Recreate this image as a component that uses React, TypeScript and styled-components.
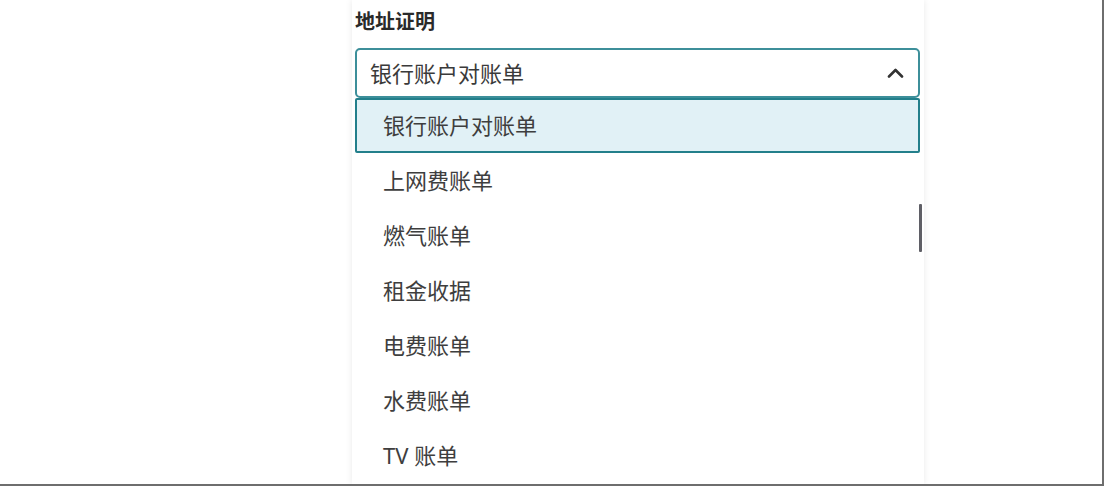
import React from "react";
import styled, { createGlobalStyle } from "styled-components";

const GlobalStyle = createGlobalStyle`
  html, body { margin: 0; padding: 0; background: #ffffff; }
  body { font-family: "Noto Sans", "Noto Sans CJK SC", sans-serif; }
  * { box-sizing: border-box; }
`;

const Frame = styled.div`
  width: 1104px;
  height: 486px;
  border-right: 2px solid #6e6e6e;
  border-bottom: 2px solid #6e6e6e;
  overflow: hidden;
  display: flex;
  padding-left: 352px;
  background: #ffffff;
`;

const Column = styled.div`
  width: 572px;
  height: 100%;
  padding: 9px 4px 0 3px;
  background: #ffffff;
  box-shadow: 0 0 7px rgba(0, 0, 0, 0.09);
  display: flex;
  flex-direction: column;
`;

const Label = styled.div`
  font-size: 20px;
  line-height: 26px;
  font-weight: 700;
  color: #2a2a2a;
  padding-left: 0;
  margin-bottom: 13px;
`;

const Field = styled.div`
  position: relative;
  display: flex;
  flex-direction: column;
`;

const SelectBox = styled.div`
  height: 50px;
  border: 2px solid #3d8f9a;
  border-radius: 5px;
  padding: 0 14px 2px 13px;
  display: flex;
  align-items: center;
  justify-content: space-between;
  font-size: 22px;
  color: #3a3a3a;
  background: #ffffff;
`;

const Chevron = styled.svg`
  width: 17px;
  height: 10px;
  display: block;
  margin-top: 1px;
`;

const List = styled.div`
  position: relative;
  display: flex;
  flex-direction: column;
  background: #ffffff;
`;

const Option = styled.div<{ $active?: boolean }>`
  height: 55px;
  display: flex;
  align-items: center;
  padding-left: ${(p) => (p.$active ? "26px" : "28px")};
  padding-bottom: 4px;
  font-size: 22px;
  color: #3e3e3e;
  background: ${(p) => (p.$active ? "#e1f1f6" : "transparent")};
  border: ${(p) => (p.$active ? "2px solid #237f8b" : "none")};
  border-radius: ${(p) => (p.$active ? "2px" : "0")};
`;

const Thumb = styled.div`
  position: absolute;
  right: -2px;
  top: 106px;
  width: 3px;
  height: 48px;
  background: #5f5f66;
  border-radius: 1px;
`;

const options = [
  "银行账户对账单",
  "上网费账单",
  "燃气账单",
  "租金收据",
  "电费账单",
  "水费账单",
  "TV 账单",
];

export default function App() {
  return (
    <>
      <GlobalStyle />
      <Frame>
        <Column>
          <Label>地址证明</Label>
          <Field>
            <SelectBox>
              <span>银行账户对账单</span>
              <Chevron viewBox="0 0 17 10">
                <polyline
                  points="2,8.5 8.5,2 15,8.5"
                  fill="none"
                  stroke="#333"
                  strokeWidth="2.6"
                  strokeLinecap="round"
                  strokeLinejoin="round"
                />
              </Chevron>
            </SelectBox>
            <List>
              {options.map((o, i) => (
                <Option key={o} $active={i === 0}>
                  {o}
                </Option>
              ))}
              <Thumb />
            </List>
          </Field>
        </Column>
      </Frame>
    </>
  );
}
